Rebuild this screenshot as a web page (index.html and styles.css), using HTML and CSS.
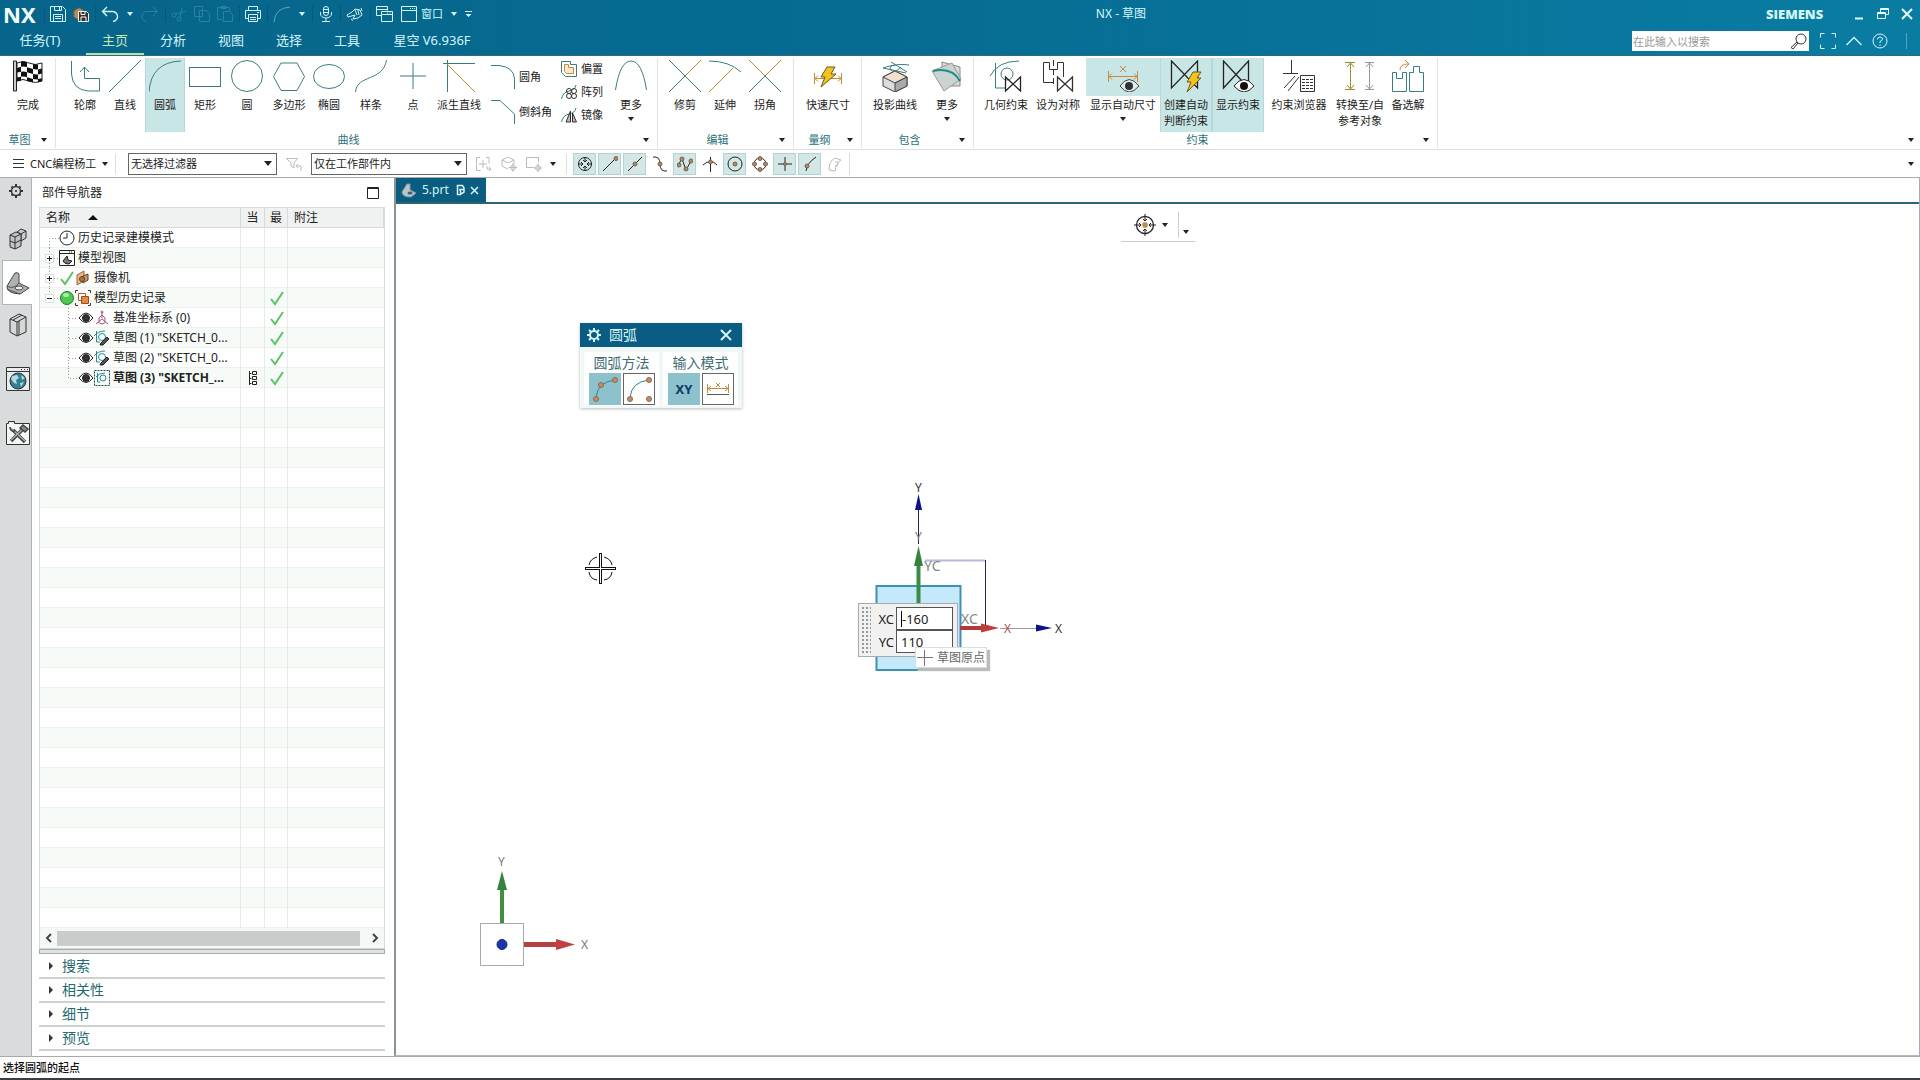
FILE: index.html
```html
<!DOCTYPE html>
<html lang="zh-CN">
<head>
<meta charset="utf-8">
<title>NX - 草图</title>
<link rel="stylesheet" href="styles.css">
</head>
<body>
<header class="app-header">
  <div class="title-row">
    <span class="brand">NX</span>
    <div class="quick">
      <i class="bar"></i>
      <button aria-label="保存"><svg width="16" height="16"><path d="M.5 .5h12l3 3v12H.5zM4.500 .5v4h7v-4M9.500 1v3M3.500 15.500v-7h9v7M5 10.500h6M5 12.500h6"/></svg></button>
      <button aria-label="另存"><svg width="16" height="16"><path d="M1 5l5-3 4 2v8l-4 2-5-3z" fill="#b98a5c" stroke="#8b6a4a"/><path d="M5.500 5.500h8l2 2v8h-10z" fill="#333" stroke="#eee"/><path d="M8 6v2.500h4V6M8 15v-4h5v4" stroke="#fff"/></svg></button>
      <i class="bar"></i>
      <button aria-label="撤消"><svg width="18" height="16"><path d="M6 1L1.500 5.500 6 10M2 5.500h9a5 5 0 0 1 1 10" stroke-width="1.4"/></svg></button>
      <span class="caret"></span>
      <button class="dim" aria-label="重做"><svg width="18" height="16"><path d="M12 1l4.500 4.500L12 10M16 5.500H7a5 5 0 0 0-2 10"/></svg></button>
      <i class="bar"></i>
      <button class="dim" aria-label="剪切"><svg width="16" height="16"><circle cx="3" cy="9" r="2"/><circle cx="8" cy="13" r="2"/><path d="M5 8l10-3M9 11l2-9"/></svg></button>
      <button class="dim" aria-label="复制"><svg width="16" height="16"><path d="M.5 .5h8v10h-8zM5.500 4.500h7l3 3v8h-10z"/></svg></button>
      <button class="dim" aria-label="粘贴"><svg width="16" height="16"><path d="M5 13.500H.5v-12h12V5M4 .5h5v2H4zM6.500 5.500h6l3 3v7h-9z"/></svg></button>
      <i class="bar"></i>
      <button aria-label="打印"><svg width="16" height="16"><path d="M3.500 4.500v-4h9v4M3.500 12.500h-3v-8h15v8h-3M3.500 8.500h9v7h-9zM5 11.500h6M5 13.500h6M12 6.500h2"/></svg></button>
      <i class="bar"></i>
      <button class="half" aria-label="圆弧"><svg width="18" height="16"><path d="M1 16Q2 2 17 1"/></svg></button>
      <span class="caret"></span>
      <i class="bar"></i>
      <button aria-label="语音"><svg width="16" height="16"><rect x="5.500" y=".5" width="5" height="9" rx="2.500"/><path d="M2.500 6v2a5.500 4 0 0 0 11 0V6M8 12v3.500M4 15.500h8M6 3.500h4M6 6.500h4"/></svg></button>
      <i class="bar"></i>
      <button aria-label="触控"><svg width="18" height="16"><path d="M1 9l5-3 3-3 5 1 2 5-4 3-5 1 2-4-7 2z"/><path d="M9 4l2 5M12 4l1 5M5 13l2 1.500M15 2l1 3"/></svg></button>
      <i class="bar"></i>
      <button aria-label="切换窗口"><svg width="18" height="16"><path d="M5.500 9.500h-5v-9h11v4M.5 3.500h11M5.500 5.500h11v10h-11zM5.500 8.500h11M11 7h1M13.500 7h1" /></svg></button>
      <button class="with-text"><svg width="16" height="16"><path d="M.5 .5h15v15H.5zM.5 4.500h15M9 2.500h1M11 2.500h1M13 2.500h1"/></svg>窗口</button>
      <span class="caret"></span>
      <button aria-label="更多命令"><svg width="8" height="8"><path d="M0 1.500h7"/><path d="M.5 4h6l-3 3z" fill="currentColor" stroke="none"/></svg></button>
    </div>
    <h1>NX - 草图</h1>
    <span class="siemens">SIEMENS</span>
    <div class="win">
      <button aria-label="最小化"><svg width="12" height="12"><path d="M2 10.500h8" stroke-width="2"/></svg></button>
      <button aria-label="还原"><svg width="12" height="12"><path d="M3.500 4V.5h8v6h-3M.5 4.500h8v6h-8zM.5 5.500h8M3.500 1.500h8"/></svg></button>
      <button aria-label="关闭"><svg width="12" height="12"><path d="M1 1l10 10M11 1L1 11" stroke-width="2"/></svg></button>
    </div>
  </div>
  <div class="menu-row">
    <nav class="tabs">
      <a href="#task" class="first">任务(T)</a>
      <a href="#home" class="active">主页</a>
      <a href="#analysis">分析</a>
      <a href="#view">视图</a>
      <a href="#select">选择</a>
      <a href="#tools">工具</a>
      <a href="#xk" class="wide">星空 V6.936F</a>
    </nav>
    <label class="search">
      <input type="text" placeholder="在此输入以搜索" aria-label="在此输入以搜索">
      <svg width="18" height="18"><circle cx="11" cy="7" r="5"/><path d="M7 10l1 1-5 6-2-1.500z"/></svg>
    </label>
    <div class="tools">
      <button aria-label="全屏"><svg width="16" height="16"><path d="M.5 4.500v-4h4M11.500 .5h4v4M15.500 11.500v4h-4M4.500 15.500h-4v-4"/></svg></button>
      <button aria-label="最小化功能区"><svg width="16" height="16"><path d="M.5 12L8 4.500l7.500 7.500" stroke-width="1.300"/></svg></button>
      <button aria-label="帮助"><svg width="16" height="16"><circle cx="8" cy="8" r="7"/><path d="M5.500 6.500Q5.500 4 8 4t2.500 2Q10.500 7.500 8 8.500v1.500M8 11.500V13"/></svg></button>
      <i class="bar"></i>
    </div>
  </div>
</header>

<section class="ribbon" aria-label="功能区">
  <div class="group">
    <div class="items">
      <button class="item w52 pad"><svg width="32" height="32"><path d="M1.500 1v30h3V1z" fill="#ccc" stroke="#222"/><path d="M5 3q6-3 12 0t13 0v18q-7 3-13 0T5 21z" fill="#fff" stroke="#222"/><path d="M9 1.500q3-.5 6 .7v5q-3-1-6-.5zM21 4q3 .6 5 .4v5q-3 .1-5-.4zM5 8l4-1.300v5L5 12.500zM15 7.200l6 1.800v5l-6-1.800zM26 9.400l4-1v5l-4 1zM9 11.700q3-.6 6 .5v5q-3-1-6-.5zM21 14q3 .6 5 .4v5q-3 .1-5-.4zM5 17.500l4-.8v4l-4 .5zM15 17.200l6 1.800v3.500l-6-1.500zM26 19l4-.8V21l-4 1.500z" fill="#111" stroke="none"/></svg><span>完成</span></button>
    </div>
    <footer><span>草图</span><i class="caret"></i></footer>
  </div>
  <div class="group">
    <div class="items curve">
      <button class="item"><svg width="32" height="32"><path d="M2.500 1v13q1 16 17 17h11V18.500h-15V7M11 12l4.500-5 4.500 5"/></svg><span>轮廓</span></button>
      <button class="item"><svg width="32" height="32"><path d="M0 32L32 0"/></svg><span>直线</span></button>
      <button class="item on"><svg width="32" height="32"><path d="M0 32Q2 2 32 1"/></svg><span>圆弧</span></button>
      <button class="item"><svg width="32" height="32"><rect x=".5" y="7.500" width="31" height="19"/></svg><span>矩形</span></button>
      <button class="item w44"><svg width="32" height="32"><circle cx="16" cy="16" r="15.500"/></svg><span>圆</span></button>
      <button class="item"><svg width="32" height="32"><path d="M.5 16.500L8 3h16l7.500 13.500L24 30.500H8z"/></svg><span>多边形</span></button>
      <button class="item"><svg width="32" height="32"><ellipse cx="16" cy="16.500" rx="15.500" ry="12"/></svg><span>椭圆</span></button>
      <button class="item w44"><svg width="32" height="32"><path d="M.5 32C2 14 28 22 31.500 0"/></svg><span>样条</span></button>
      <button class="item"><svg width="32" height="32"><path d="M16 3v26M3 16h26"/></svg><span>点</span></button>
      <button class="item w52"><svg width="32" height="32"><path d="M4.500 0v32M0 3.500h32"/><path d="M4 4l28 28" class="or"/></svg><span>派生直线</span></button>
      <div class="stack two">
        <button><svg width="24" height="24"><path d="M0 .5h8Q23 2 23.500 14v10" /></svg>圆角</button>
        <button><svg width="24" height="24"><path d="M0 .5h9L23.500 14v10"/></svg>倒斜角</button>
      </div>
      <div class="stack three">
        <button><svg width="16" height="16"><path d="M.5 .5h9v3h6v12H4.500l-4-4z"/><path d="M3.500 3.500h4v3h5v6h-7l-2-2z" class="or" fill="#fbeacb"/></svg>偏置</button>
        <button><svg width="16" height="16"><path d="M.5 15Q2 8 8 7t7-6"/><g stroke="#333"><circle cx="8" cy="7" r="2.500"/><circle cx="13" cy="7" r="2.500"/><circle cx="8" cy="12" r="2.500"/><circle cx="13" cy="12" r="2.500"/></g></svg>阵列</button>
        <button><svg width="16" height="16"><path d="M.5 15Q2 8 8 7t7-6"/><path d="M9.500 4v11H5zM11.500 6v9h4z" stroke="#333" fill="#bbb"/></svg>镜像</button>
      </div>
      <button class="item w52"><svg width="32" height="32"><path d="M.5 30Q5 1 16 1t15.500 29"/></svg><span>更多</span><i class="caret"></i></button>
    </div>
    <footer><span>曲线</span><i class="caret"></i></footer>
  </div>
  <div class="group">
    <div class="items edit">
      <button class="item"><svg width="32" height="32"><path d="M0 0l32 32M0 32l16-16"/><path d="M16 16L32 0" class="or"/></svg><span>修剪</span></button>
      <button class="item"><svg width="32" height="32"><path d="M0 1q20 0 32 11"/><path d="M0 32L24 8" class="or"/></svg><span>延伸</span></button>
      <button class="item"><svg width="32" height="32"><path d="M0 32l16-16 16 16"/><path d="M0 0l16 16L32 0" class="or"/></svg><span>拐角</span></button>
    </div>
    <footer><span>编辑</span><i class="caret"></i></footer>
  </div>
  <div class="group">
    <div class="items dim-group">
      <button class="item w52"><svg width="32" height="32"><path d="M2.500 13v11M29.500 13v11M3 18.500h26M6 15.500l-3 3 3 3M26 15.500l3 3-3 3" class="or"/><path d="M15 7h8l-4 7h5L9 27l4-10H9z" fill="#f5c21d" stroke="#6b5a20"/></svg><span>快速尺寸</span></button>
    </div>
    <footer><span>量纲</span><i class="caret"></i></footer>
  </div>
  <div class="group">
    <div class="items include">
      <button class="item w52"><svg width="32" height="32"><path d="M4 17l12-6 12 6v9l-12 6-12-6z" fill="#ddd" stroke="#444"/><path d="M4 17l12-6 12 6-12 6z" fill="#f3e1cb" stroke="#444"/><path d="M28 17v9l-12 6v-9z" fill="#aaa" stroke="#444"/><path d="M4 8Q18 3 30 5M4 8l23 5M12 2l16 10M16 5Q9 6 12 10t10-3"/></svg><span>投影曲线</span></button>
      <button class="item w52"><svg width="32" height="32"><path d="M11 2l18 5v19H11z" fill="#d8dcdc" stroke="#888"/><path d="M1 11L21 3l9 16-17 12z" fill="#cbd2d2" stroke="#999"/><path d="M2 11q19-4 27 10" stroke="#179080" stroke-width="2"/></svg><span>更多</span><i class="caret"></i></button>
    </div>
    <footer><span>包含</span><i class="caret"></i></footer>
  </div>
  <div class="group">
    <div class="items constraint">
      <button class="item w52"><svg width="32" height="32"><path d="M5.500 3v25h10M0 16Q8 1 29 1"/><circle cx="17" cy="14" r="6"/><path d="M15.500 17v14l15-14v14z" stroke="#222" stroke-width="1.300"/></svg><span>几何约束</span></button>
      <button class="item w52"><svg width="32" height="32"><path d="M11 22.500H1.500v-20h6v7h8v-7h6V17" stroke="#333"/><path d="M11.500 0v24" stroke="#333" stroke-dasharray="6 3"/><path d="M15.500 17v14l15-14v14z" stroke="#333" stroke-width="1.300"/></svg><span>设为对称</span></button>
      <button class="item split-on"><svg width="32" height="32"><path d="M1.500 11v11M30.500 11v11M2 16.500h28M5 13.500l-3 3 3 3M27 13.500l3 3-3 3M13 6l6 6M19 6l-6 6" class="or"/><path d="M13 26q9-13 19 0-10 12-19 0z" fill="#dceeee" stroke="#444"/><circle cx="22" cy="26" r="4" fill="#333" stroke="none"/></svg><span>显示自动尺寸</span><i class="caret"></i></button>
      <button class="item w52 on"><svg width="32" height="32"><path d="M1.500 1v27L27.500 1v27z" stroke="#222" stroke-width="1.300"/><path d="M23 12h8l-4 6h4L17 32l4-10h-4z" fill="#f5c21d" stroke="#6b5a20"/></svg><span>创建自动<br>判断约束</span></button>
      <button class="item w52 on"><svg width="32" height="32"><path d="M1.500 1v27L26.500 1v27z" stroke="#222" stroke-width="1.300"/><path d="M12 26q10-13 20 0-10 12-20 0z" fill="#fff" stroke="#222"/><circle cx="22" cy="26" r="4" fill="#111" stroke="none"/></svg><span>显示约束</span></button>
      <button class="item w68"><svg width="32" height="32"><path d="M0 13.500h15M8.500 0v13M1 28l11-12M5 31L16 17M17.500 15.500h14v16h-14z" stroke="#333"/><path d="M19 19.500h11M19 22.500h11M19 25.500h11M19 28.500h11" stroke="#333" stroke-dasharray="3 1"/></svg><span>约束浏览器</span></button>
      <button class="item w52"><svg width="32" height="32"><path d="M1 2.500h10M1 29.500h10M6.500 3v26M3 7l3.500-4L10 7M3 25l3.500 4 3.500-4" stroke="#a58a2a"/><path d="M21 2.500h9M21 29.500h9M25.500 3v26M22 7l3.500-4L29 7M22 25l3.500 4 3.500-4" stroke="#999"/></svg><span>转换至/自<br>参考对象</span></button>
      <button class="item w44"><svg width="32" height="32"><path d="M.5 12.500h4v6h6v-6h4v19H.5zM17.500 31.500v-19h4v-6h6v6h4v19z"/><path d="M8 10q0-6 8-6h1M13 0l4 4-4 4" class="or"/></svg><span>备选解</span></button>
    </div>
    <footer><span>约束</span><i class="caret"></i></footer>
  </div>
  <i class="caret row-end"></i>
</section>

<section class="select-bar" aria-label="选择条">
  <button class="menu-btn"><svg width="11" height="11"><path d="M0 1.500h11M0 5.500h11M0 9.500h11" stroke="#333"/></svg>CNC编程杨工<i class="caret"></i></button>
  <label class="combo filter"><select aria-label="选择过滤器"><option>无选择过滤器</option></select><i class="caret"></i></label>
  <button class="plain off" aria-label="重置过滤器"><svg width="16" height="16"><path d="M.5 2.500h11L8 7v5l-3-2V7zM10 10h5v5M12 8l-2 2 2 2"/></svg></button>
  <label class="combo scope"><select aria-label="选择范围"><option>仅在工作部件内</option></select><i class="caret"></i></label>
  <div class="small-tools">
    <button class="plain off" aria-label="选择模式"><svg width="16" height="16"><path d="M4 1.500H.5v13h4M10 1.500h3v6M7 4v8M3 8h8M11 10v3h4M13 15l2-2-2-2"/></svg></button>
    <button class="plain off" aria-label="体选择"><svg width="16" height="16"><path d="M1 4l6-3 6 3v4M7 13l-6-3V4l6 3 6-3M12 7v9M7.500 11.500h9"/><circle cx="12" cy="11.500" r="2.500"/></svg></button>
    <button class="plain off" aria-label="区域选择"><svg width="16" height="16"><path d="M8 11.500H.5v-10h12V6M12 7v9M8 12h8"/><circle cx="12" cy="12" r="2.500"/></svg></button>
    <i class="caret"></i>
  </div>
  <div class="snaps">
    <button class="on" aria-label="启用捕捉点"><svg width="16" height="16"><circle cx="8" cy="8" r="6.500"/><path d="M8 1v5M8 10v5M1 8h5M10 8h5M6 4l2 2 2-2M6 12l2-2 2 2M4 6l2 2-2 2M12 6l-2 2 2 2"/></svg></button>
    <button class="on" aria-label="终点"><svg width="16" height="16"><path d="M1 15L14 2"/><circle cx="14" cy="2.500" r="2" class="dot"/></svg></button>
    <button class="on" aria-label="中点"><svg width="16" height="16"><path d="M1 15L15 1"/><circle cx="8" cy="8" r="2" class="dot"/></svg></button>
    <button aria-label="控制点"><svg width="16" height="16"><path d="M1 1q7-1 7 7t7 7"/><circle cx="8" cy="8" r="2" class="dot"/></svg></button>
    <button class="on" aria-label="极点"><svg width="16" height="16"><path d="M1 9L5 3l4 11 5-9"/><circle cx="2" cy="9" r="2" class="dot"/><circle cx="5" cy="3" r="2" class="dot"/><circle cx="9" cy="13" r="2" class="dot"/><circle cx="14" cy="5" r="2" class="dot"/></svg></button>
    <button aria-label="交点"><svg width="16" height="16"><path d="M8.500 1v15M1 9q8-7 14 0"/><circle cx="8.500" cy="6" r="2" class="dot"/></svg></button>
    <button class="on" aria-label="圆心"><svg width="16" height="16"><circle cx="8" cy="8" r="7"/><circle cx="8" cy="8" r="2" class="dot"/></svg></button>
    <button aria-label="象限点"><svg width="16" height="16"><circle cx="8" cy="8" r="6"/><circle cx="8" cy="2.500" r="2" class="dot"/><circle cx="8" cy="13.500" r="2" class="dot"/><circle cx="2.500" cy="8" r="2" class="dot"/><circle cx="13.500" cy="8" r="2" class="dot"/></svg></button>
    <button class="on" aria-label="现有点"><svg width="16" height="16"><path d="M8 1v14M1 8h14"/><circle cx="8" cy="8" r="1.500" class="dot"/></svg></button>
    <button class="on" aria-label="曲线上的点"><svg width="16" height="16"><path d="M4 15Q5 7 14 1"/><circle cx="5" cy="10" r="2" class="dot"/></svg></button>
    <button class="off" aria-label="面上的点"><svg width="16" height="16"><path d="M2 14q0-9 6-12l6 2q-5 3-6 11zM8 6q4-1 3 2t-3 2"/></svg></button>
  </div>
  <i class="caret row-end"></i>
</section>

<main class="work">
  <nav class="rail" aria-label="资源条">
    <button class="gear" aria-label="设置"><svg width="14" height="14"><circle cx="7" cy="7" r="4.500" stroke-width="1.500"/><path d="M7 0v2M7 12v2M0 7h2M12 7h2" stroke-width="2"/><path d="M2.500 2.500l1 1M10.500 10.500l1 1M11.500 2.500l-1 1M3.500 10.500l-1 1" stroke-width="2"/><circle cx="7" cy="7" r="1" fill="#222" stroke="none"/></svg></button>
    <button class="gap" aria-label="装配导航器"><svg width="20" height="24"><path d="M9 5l4-3 5 2v7l-5 3z" fill="#c9cccc"/><path d="M9 5l4 2 5-3M13 7v6"/><path d="M2 8l6-3 5 2v12l-6 3-5-2z" fill="#c0c4c4"/><path d="M2 8l5 2 6-3M7 10v12M2 14l5 2 6-3"/></svg></button>
    <button class="current" aria-label="部件导航器"><svg width="26" height="24"><path d="M2 15L10 2q3-1 4 1v9l10 5-9 6q-14-1-13-8z" fill="#aeb2b2" stroke="#444"/><path d="M2 15q6 4 12-3M2 18l13 5" stroke="#555"/><ellipse cx="14" cy="17" rx="4" ry="2" fill="#eee" stroke="#444"/></svg></button>
    <button class="reuse" aria-label="重用库"><svg width="18" height="24"><path d="M1 6l9-5 7 3v15l-9 4-7-4z" fill="#d5d8d8"/><path d="M1 6l7 3 9-5M8 9v14M4 7l9-5M10 8v14"/></svg></button>
    <button class="framed globe" aria-label="Web 浏览器"><svg width="24" height="24"><path d="M.5 .5h23v23H.5z" fill="#e9eded"/><path d="M1 4.500h22M15 2.500h1M18 2.500h1M21 2.500h1"/><circle cx="12" cy="14" r="8" fill="#2f7f95"/><path d="M6 9l5-1 2 3-3 2 1 4-3-1-3-4zM15 8l4 3-3 2zM14 16l4-1-3 5z" fill="#b8d8dc" stroke="none"/></svg></button>
    <button class="framed tool" aria-label="工具"><svg width="24" height="24"><path d="M.5 2.500h2v-2h6v2h15v21H.5z" fill="#f4f6f6"/><path d="M5 20L17 8M7 9l12 12" stroke="#444" stroke-width="3.500"/><path d="M5 19L17 8M7 9l12 11" stroke="#aaa" stroke-width="1.500"/><path d="M4 6q0 5 5 4M14 7l3-3 5 4-3 3z" stroke="#444" stroke-width="1.500" fill="#888"/></svg></button>
  </nav>

  <aside class="panel">
    <div class="panel-head"><h2>部件导航器</h2><button aria-label="停靠"><svg width="12" height="12"><path d="M.5 .5h11v11H.5zM.5 1.500h11" stroke="#222"/></svg></button></div>
    <div class="tree">
      <table>
        <colgroup><col class="c-name"><col class="c-cur"><col class="c-new"><col></colgroup>
        <thead><tr><th scope="col">名称<i class="up"></i></th><th scope="col" class="mid">当</th><th scope="col" class="mid">最</th><th scope="col">附注</th></tr></thead>
        <tbody>
          <tr><td><div class="cell"><svg class="twig" width="17" height="20"><path d="M7.500 20V10.500H17"/></svg><svg width="16" height="16"><circle cx="8" cy="8" r="7" fill="#fff"/><path d="M8 3v5H4"/></svg><span>历史记录建模模式</span></div></td><td></td><td></td><td></td></tr>
          <tr><td><div class="cell"><svg class="twig" width="17" height="20"><path d="M7.500 0v20M12 10.500h5"/><path class="box" d="M3.500 6.500h8v8h-8z"/><path class="sign" d="M5 10.500h5M7.500 8v5"/></svg><svg width="16" height="16"><path d="M.5 .5h15v15H.5zM.5 3.500h15M10 2h1M12 2h1"/><path d="M4 11l4-5 1 4 4 1-3 3q-5 0-6-3z" fill="#777"/></svg><span>模型视图</span></div></td><td></td><td></td><td></td></tr>
          <tr><td><div class="cell"><svg class="twig" width="17" height="20"><path d="M7.500 0v20M12 10.500h5"/><path class="box" d="M3.500 6.500h8v8h-8z"/><path class="sign" d="M5 10.500h5M7.500 8v5"/></svg><svg width="16" height="16"><path class="ok" d="M2 9l4 5 8-12"/></svg><svg width="16" height="16"><path d="M2 5l7-4v10l-7 4z" fill="#e6b98c" stroke="#a0622d"/><path d="M8 6l5-2v6l-5 3z" fill="#c9955f" stroke="#604020"/><circle cx="7" cy="9" r="2.500" fill="#a97848" stroke="#604020"/></svg><span>摄像机</span></div></td><td></td><td></td><td></td></tr>
          <tr><td><div class="cell"><svg class="twig" width="17" height="20"><path d="M7.500 0v7M12 10.500h5"/><path class="box" d="M3.500 6.500h8v8h-8z"/><path class="sign" d="M5 10.500h5"/></svg><svg width="16" height="16"><circle cx="8" cy="8" r="6.500" fill="#4dc94f" stroke="#346a35"/><ellipse cx="7" cy="5" rx="3" ry="2" fill="#a9efa5" stroke="none"/></svg><svg width="16" height="16"><path d="M.5 3V.5H3M13 .5h2.500V3M15.500 13v2.500H13M3 15.500H.5V13" stroke="#553322"/><path d="M3.500 3.500h7v7h-7z" fill="#fff" stroke="#b35b1e"/><path d="M6.500 6.500h7v7h-7z" fill="#e08a45" stroke="#a04c12"/></svg><span>模型历史记录</span></div></td><td></td><td class="mid"><svg width="16" height="16"><path class="ok" d="M2 9l4 5 8-12"/></svg></td><td></td></tr>
          <tr><td><div class="cell"><svg class="twig" width="36" height="20"><path d="M26.500 0v20M27 10.500h9"/></svg><svg width="16" height="16"><path d="M1 8q7-10 14 0-7 9-14 0z" fill="#fff"/><circle cx="8" cy="8" r="3.500" fill="#333"/></svg><svg width="16" height="16"><path d="M8 8V2M8 9l-6 5M8 9l6 5M4.500 12.500q3.500 3 7 0M8 5L5 8v4M8 5l3 3v4" stroke="#a8527c"/><circle cx="8" cy="2" r="1" stroke="#a8527c"/></svg><span>基准坐标系 (0)</span></div></td><td></td><td class="mid"><svg width="16" height="16"><path class="ok" d="M2 9l4 5 8-12"/></svg></td><td></td></tr>
          <tr><td><div class="cell"><svg class="twig" width="36" height="20"><path d="M26.500 0v20M27 10.500h9"/></svg><svg width="16" height="16"><path d="M1 8q7-10 14 0-7 9-14 0z" fill="#fff"/><circle cx="8" cy="8" r="3.500" fill="#333"/></svg><svg width="16" height="16"><path d="M2.500 1v11H6M0 6q4-5 11-5" stroke="#2a8a96"/><circle cx="8" cy="7" r="3.500" stroke="#2a8a96"/><path d="M6 15l1-2 6-6 2 2-6 6z" fill="#555" stroke="#222"/></svg><span>草图 (1) "SKETCH_0...</span></div></td><td></td><td class="mid"><svg width="16" height="16"><path class="ok" d="M2 9l4 5 8-12"/></svg></td><td></td></tr>
          <tr><td><div class="cell"><svg class="twig" width="36" height="20"><path d="M26.500 0v20M27 10.500h9"/></svg><svg width="16" height="16"><path d="M1 8q7-10 14 0-7 9-14 0z" fill="#fff"/><circle cx="8" cy="8" r="3.500" fill="#333"/></svg><svg width="16" height="16"><path d="M2.500 1v11H6M0 6q4-5 11-5" stroke="#2a8a96"/><circle cx="8" cy="7" r="3.500" stroke="#2a8a96"/><path d="M6 15l1-2 6-6 2 2-6 6z" fill="#555" stroke="#222"/></svg><span>草图 (2) "SKETCH_0...</span></div></td><td></td><td class="mid"><svg width="16" height="16"><path class="ok" d="M2 9l4 5 8-12"/></svg></td><td></td></tr>
          <tr class="bold"><td><div class="cell"><svg class="twig" width="36" height="20"><path d="M26.500 0v10.500H36"/></svg><svg width="16" height="16"><path d="M1 8q7-10 14 0-7 9-14 0z" fill="#fff"/><circle cx="8" cy="8" r="3.500" fill="#333"/></svg><svg width="16" height="16"><path d="M.5 .5h15v15H.5z" stroke="#245" stroke-dasharray="2 1"/><path d="M3.500 3v9H6M2 7q3-4 9-4" stroke="#2a8a96"/><circle cx="9" cy="8" r="3" stroke="#2a8a96"/></svg><span>草图 (3) "SKETCH_...</span></div></td><td class="mid"><svg width="10" height="16"><path d="M1.500 1v14M1.500 3.500h2M1.500 8.500h2M1.500 13.500h2M4.500 1.500h4v3h-4zM4.500 6.500h4v3h-4zM4.500 11.500h4v3h-4z"/></svg></td><td class="mid"><svg width="16" height="16"><path class="ok" d="M2 9l4 5 8-12"/></svg></td><td></td></tr>
        </tbody>
      </table>
    </div>
    <div class="hscroll">
      <button aria-label="向左滚动"><svg width="8" height="10"><path d="M6 1L2 5l4 4" stroke-width="2"/></svg></button>
      <span class="thumb"></span>
      <button aria-label="向右滚动"><svg width="8" height="10"><path d="M2 1l4 4-4 4" stroke-width="2"/></svg></button>
    </div>
    <div class="splitter"></div>
    <div class="sections">
      <button><i></i>搜索</button>
      <button><i></i>相关性</button>
      <button><i></i>细节</button>
      <button><i></i>预览</button>
    </div>
  </aside>

  <section class="view">
    <div class="doc-tabs">
      <div class="doc-tab"><svg width="16" height="16"><path d="M1 10L6 2h3v6l6 3-5 4q-9 0-9-5z" fill="#b9c4c8" stroke="#8a979c"/><ellipse cx="9" cy="11" rx="2.500" ry="1.500" fill="#2d6b80" stroke="none"/></svg><span>5.prt</span><svg width="9" height="12"><path d="M5 10.500H1.500v-9h5L8 4v1M3 1.500h3M4 5.500h4v2.500L5 10z" stroke-width="1.500"/></svg><button aria-label="关闭 5.prt"><svg width="9" height="9"><path d="M1 1l7 7M8 1L1 8" stroke-width="1.500"/></svg></button></div>
    </div>
    <div class="canvas">
      <svg class="scene" role="img" aria-label="草图坐标系"><g transform="translate(-396 -204)">
        <path d="M600.500 553v31M585 568.500h31" stroke="#111" stroke-width="3"/><path d="M600.500 554v29M586 568.500h29" stroke="#fff"/>
        <path d="M604 557q7 2 8 8M612 572q-1 7-8 8M597 580q-7-1-8-8M589 565q1-6 8-8" stroke="#111"/>
        <path d="M925 560.500h60" stroke="#b9b9dc" stroke-width="2"/><path d="M985.500 560v66" stroke="#22225c"/>
        <rect x="876.500" y="586" width="84" height="84" fill="#c3e9fb" stroke="#3f90b8" stroke-width="2"/>
        <path d="M918.500 510v34" stroke="#22225c"/><path d="M918.500 494l3.500 16h-7z" fill="#10108c" stroke="none"/>
        <path d="M918.500 565v40" stroke="#3c8a48" stroke-width="4"/><path d="M918.500 546l4.500 20h-9z" fill="#37813f" stroke="none"/>
        <path d="M960 628h22" stroke="#b23a3a" stroke-width="4"/><path d="M999 628l-18 4.500v-9z" fill="#c23c3c" stroke="none"/>
        <path d="M1000 628.500h36" stroke="#9a9aa8"/><path d="M1052 628l-16 3.500v-7z" fill="#10108c" stroke="none"/>
        <g class="axis"><text x="915" y="492">Y</text><text x="1055" y="633">X</text></g>
        <g class="axis soft"><text x="915" y="541">Y</text><text x="924" y="571" class="csys">YC</text></g>
        <g class="axis red"><text x="1004" y="633">X</text><text x="961" y="624" class="csys">XC</text></g>
        <path d="M502 888v36" stroke="#41903f" stroke-width="4"/><path d="M502 871l5 19h-10z" fill="#37813f" stroke="none"/>
        <path d="M524 944.500h33" stroke="#b24343" stroke-width="5"/><path d="M575 944.500l-19 5.500v-11z" fill="#c24040" stroke="none"/>
        <rect x="480.500" y="923.500" width="43" height="42" fill="#fff" stroke="#aaa"/>
        <circle cx="502" cy="944.500" r="5" fill="#1c38a8" stroke="#142878"/>
        <g class="axis soft"><text x="498" y="866">Y</text><text x="581" y="949">X</text></g>
      </g></svg>

      <div class="mini-bar">
        <button aria-label="定向视图"><svg width="22" height="22"><circle cx="11" cy="11" r="8.500" stroke="#333" stroke-width="1.400"/><circle cx="11" cy="11" r="3" fill="#b98a55" stroke="#e0c8a0"/><path d="M11 0v7M11 15v7M0 11h7M15 11h7M9 5l2 2 2-2M9 17l2-2 2 2M5 9l2 2-2 2M17 9l-2 2 2 2" stroke="#222"/></svg></button>
        <i class="caret"></i><i class="rule"></i><i class="caret low"></i>
      </div>

      <div class="dialog" role="dialog" aria-label="圆弧">
        <div class="dialog-head"><svg width="14" height="14"><circle cx="7" cy="7" r="4" stroke-width="2"/><path d="M7 0v2.500M7 11.500V14M0 7h2.500M11.500 7H14M2 2l1.800 1.800M10.200 10.200L12 12M12 2l-1.800 1.800M3.800 10.200L2 12" stroke-width="2"/></svg><span>圆弧</span><button aria-label="关闭"><svg width="12" height="12"><path d="M1 1l10 10M11 1L1 11" stroke-width="2"/></svg></button></div>
        <div class="dialog-body">
          <fieldset><legend>圆弧方法</legend><div>
            <button class="on" aria-label="三点定圆弧"><svg width="30" height="30"><path d="M6 24Q7 8 25 6" stroke="#2a8496"/><circle cx="6" cy="25" r="2.500" class="knob"/><circle cx="11" cy="11" r="2.500" class="knob"/><circle cx="25" cy="6" r="2.500" class="knob"/></svg></button>
            <button aria-label="中心和端点定圆弧"><svg width="30" height="30"><path d="M6 24Q7 8 25 6" stroke="#2a8496"/><circle cx="6" cy="25" r="2.500" class="knob"/><circle cx="25" cy="25" r="2.500" class="knob"/><circle cx="25" cy="6" r="2.500" class="knob"/></svg></button>
          </div></fieldset>
          <fieldset><legend>输入模式</legend><div>
            <button class="on">XY</button>
            <button aria-label="参数模式"><svg width="30" height="30"><path d="M4.500 10v9M25.500 10v9M5 14.500h20M8 12l-3 2.500L8 17M22 12l3 2.500-3 2.500M13 9l4 4M17 9l-4 4" class="or"/><path d="M4 20.500h22" stroke="#555"/></svg></button>
          </div></fieldset>
        </div>
      </div>

      <div class="coords">
        <i class="grip"></i>
        <div class="fields">
          <label for="xc">XC</label><div class="field active"><input id="xc" type="text" value="-160"></div>
          <label for="yc">YC</label><div class="field"><input id="yc" type="text" value="110"></div>
        </div>
      </div>
      <div class="tip" role="tooltip"><svg width="16" height="16"><path d="M7.500 0v16M0 7.500h16" stroke="#777"/></svg>草图原点</div>
    </div>
  </section>
</main>

<footer class="status"><span>选择圆弧的起点</span></footer>
</body>
</html>
```

FILE: styles.css
```css
* { box-sizing: border-box; }
body {
  margin: 0;
  min-height: 100vh;
  display: flex;
  flex-direction: column;
  overflow: hidden;
  background: #fff;
  color: #222;
  font: 12px/16px "Noto Sans", "Noto Sans CJK SC", sans-serif;
}
button, input, select { font: inherit; color: inherit; }
button { margin: 0; padding: 0; border: 0; background: none; white-space: nowrap; }
svg { display: block; flex: none; fill: none; stroke: currentColor; }
.caret {
  flex: none;
  width: 0;
  height: 0;
  border: 3px solid transparent;
  border-top: 4px solid currentColor;
  border-bottom: 0;
}
.or { stroke: #c68a3c; }

/* header */
.app-header {
  height: 56px;
  color: #d2f6fb;
  background: linear-gradient(90deg, #07648a, #076d93 50%, #0a7ca2);
  border-bottom: 1px solid #35677a;
}
.title-row { display: flex; align-items: center; height: 27px; }
.brand { width: 36px; padding-left: 3px; font: 700 22px/26px "Noto Sans", sans-serif; color: #f0ffff; }
.quick { display: flex; align-items: center; gap: 7px; width: 440px; padding-left: 9px; }
.quick .bar { width: 1px; height: 16px; margin: 0 -2px 0 -1px; background: #0a5678; }
.quick .caret { margin: 0 1px; }
.quick .dim { opacity: .18; }
.quick .half { opacity: .45; }
.quick .with-text { display: flex; align-items: center; gap: 4px; font-size: 11px; }
.title-row h1 { flex: 1; margin: 0; text-align: center; font-size: 12px; font-weight: 400; }
.siemens { width: 87px; font: 800 13px/16px "Open Sans", sans-serif; }
.win { display: flex; gap: 12px; padding-right: 7px; color: #e8ffff; }
.menu-row { display: flex; align-items: center; height: 28px; }
.tabs { flex: 1; display: flex; font-size: 13px; line-height: 18px; }
.tabs a { width: 58px; padding: 4px 0; color: inherit; text-align: center; text-decoration: none; white-space: nowrap; border-bottom: 2px solid transparent; }
.tabs .first { width: 80px; margin-right: 6px; }
.tabs .wide { width: 112px; }
.tabs .active { color: #c5e8b0; border-color: #b9e3a4; }
.search { display: flex; align-items: center; width: 177px; height: 20px; background: #fff; color: #333; padding-right: 1px; }
.search input { flex: 1; min-width: 0; height: 20px; padding: 0 1px; border: 0; outline: 0; background: none; font-size: 11px; }
.search input::placeholder { color: #999; }
.tools { display: flex; align-items: center; gap: 10px; width: 111px; padding-left: 11px; }
.tools .bar { width: 1px; height: 16px; margin-left: 8px; background: #4aa5c0; }

/* ribbon */
.ribbon { display: flex; height: 94px; padding-top: 2px; border-bottom: 1px solid #ddd; font-size: 11px; }
.group { display: flex; flex-direction: column; margin-bottom: 1px; border-right: 1px solid #e0e4e4; }
.items { display: flex; height: 74px; color: #3d7c7e; }
.item { display: flex; flex-direction: column; align-items: center; width: 40px; padding-top: 2px; border: 1px solid transparent; border-top: 0; border-bottom: 0; }
.item span { margin-top: 5px; color: #222; }
.item .caret { margin-top: 4px; color: #222; }
.item.on { background: #c9e6e6; border-color: #b7d8d8; }
.item.w44 { width: 44px; }
.item.w52 { width: 52px; }
.item.w68 { width: 70px; }
.pad { margin: 0 1px 0 2px; }
.item.split-on { width: 74px; margin-left: 2px; background: linear-gradient(#c9e6e6 38px, transparent 38px); }
.curve { padding-left: 9px; }
.stack { display: flex; flex-direction: column; }
.stack button { display: flex; align-items: center; gap: 4px; color: #222; }
.stack svg { color: #3d7c7e; }
.two { gap: 11px; width: 70px; padding: 7px 0 0 6px; }
.three { gap: 7px; width: 50px; padding: 3px 0 0 6px; }
.edit { padding: 0 8px 0 7px; }
.dim-group { padding: 0 7px 0 8px; }
.include { padding: 0 0 0 7px; }
.constraint { padding: 0 7px 0 6px; }
.group footer { display: flex; align-items: center; height: 16px; padding-right: 8px; color: #2b7176; }
.group footer span { flex: 1; padding-right: 2px; text-align: center; }
.group footer .caret { color: #222; }
.row-end { margin: 0 6px 0 auto; }
.ribbon > .row-end { align-self: flex-end; margin-bottom: 7px; }

/* selection bar */
.select-bar { display: flex; align-items: center; height: 28px; border-bottom: 1px solid #aaa; font-size: 11px; }
.menu-btn { display: flex; align-items: center; gap: 6px; width: 116px; height: 20px; padding-left: 13px; border-right: 1px solid #ddd; }
.combo { display: flex; align-items: center; height: 22px; padding-right: 4px; border: 1px solid #666; }
.combo select { flex: 1; height: 20px; padding: 0 2px; border: 0; background: none; appearance: none; outline: 0; }
.combo .caret { border-width: 5px 4px 0; }
.filter { width: 149px; margin-left: 12px; }
.scope { width: 156px; margin-left: 9px; }
.plain { margin-left: 9px; }
.off { color: #bbb; }
.small-tools { display: flex; align-items: center; width: 100px; height: 20px; border-right: 1px solid #ddd; }
.small-tools .caret { margin-left: 8px; }
.snaps { display: flex; gap: 2px; padding: 0 3px 0 6px; border-right: 1px solid #ddd; }
.snaps button { display: grid; place-items: center; width: 23px; height: 22px; border: 1px solid transparent; }
.snaps .on { background: #d2e7e6; border-color: #b4d2d2; }
.dot { fill: #b08868; stroke: #7a604c; }

/* work area */
.work { flex: 1; display: flex; min-height: 0; }
.rail { display: flex; flex-direction: column; width: 32px; background: #d9dcdc; border-right: 1px solid #b0b4b4; color: #333; }
.rail button { display: grid; place-items: center; height: 45px; padding-left: 4px; }
.rail .gear { height: 26px; padding: 0; }
.rail .gap { margin-top: 14px; height: 42px; }
.rail .current { margin: 0 -1px 0 2px; padding: 0; background: #fff; border: 1px solid #b0b4b4; border-right: 0; }
.rail .reuse { height: 40px; }
.rail .framed { height: 24px; }
.rail .globe { margin-top: 22px; }
.rail .tool { margin-top: 30px; }
.panel { display: flex; flex-direction: column; width: 362px; padding: 0 9px 0 7px; }
.panel-head { display: flex; align-items: center; justify-content: space-between; height: 29px; padding: 2px 6px 2px 3px; }
.panel-head h2 { margin: 0; font-size: 12px; font-weight: 400; }
.tree {
  flex: 1;
  border: 1px solid #d5dada;
  border-bottom: 0;
  background:
    linear-gradient(90deg, transparent 200px, #e6ebe8 200px 201px, transparent 201px 224px, #e6ebe8 224px 225px, transparent 225px 247px, #e6ebe8 247px 248px, transparent 248px),
    repeating-linear-gradient(#fff 0 19px, #edf2ee 19px 20px, #f7fbf7 20px 39px, #edf2ee 39px 40px) 0 20px;
}
.tree table { width: 100%; table-layout: fixed; border-collapse: separate; border-spacing: 0; }
.c-name { width: 201px; }
.c-cur { width: 24px; }
.c-new { width: 23px; }
th { height: 20px; padding: 0 0 0 6px; text-align: left; font-weight: 400; background: #eff2f1; border-right: 1px solid #d5dada; border-bottom: 1px solid #d5dada; }
td { height: 20px; padding: 0; }
.mid { padding: 0; text-align: center; }
.mid svg { margin: 0 auto; }
.up { display: inline-block; margin: 0 0 2px 18px; border: 5px solid transparent; border-top: 0; border-bottom-color: #111; }
.cell { display: flex; align-items: center; height: 20px; padding-left: 2px; white-space: nowrap; }
.cell span { padding-left: 3px; }
.twig { stroke: #999; stroke-dasharray: 1 2; }
.twig .box { fill: #fff; stroke: #ddd; stroke-dasharray: none; }
.twig .sign { stroke: #222; stroke-dasharray: none; }
.ok { stroke: #5cc268; stroke-width: 2; }
.bold { font-weight: 700; }
.hscroll { display: flex; align-items: center; gap: 4px; height: 21px; padding: 0 5px; border: 1px solid #d5dada; border-top: 0; background: #f5f8f6; color: #444; }
.thumb { flex: 1; height: 15px; margin-right: 7px; background: #c9cccb; }
.splitter { height: 5px; border: 1px solid #a5aaaa; background: #dfe3e1; }
.sections { padding: 1px 0 5px; }
.sections button { display: flex; align-items: center; gap: 9px; width: 100%; height: 24px; padding-left: 10px; font-size: 14px; color: #23696e; border-bottom: 2px solid #ced1d1; }
.sections i { border: 4px solid transparent; border-left: 4px solid #333; border-right: 0; }

/* graphics window */
.view { flex: 1; display: flex; flex-direction: column; min-width: 0; border-left: 2px solid #8b9494; border-right: 1px solid #aab; border-bottom: 1px solid #b5baba; }
.doc-tabs { display: flex; height: 26px; border-bottom: 2px solid #2a6672; }
.doc-tab { display: flex; align-items: center; width: 90px; gap: 5px; padding-left: 5px; background: #0a5d80; color: #d5f5fa; }
.doc-tab span { width: 29px; }
.canvas { position: relative; flex: 1; overflow: hidden; }
.scene { position: absolute; inset: 0; width: 100%; height: 100%; }
.axis { fill: #333; stroke: none; font: 12px "Noto Sans", sans-serif; }
.soft { fill: #777; }
.red { fill: #b05050; }
.csys { font-size: 14px; fill: #7d8a84; }
.mini-bar { position: absolute; left: 725px; top: 1px; display: flex; align-items: center; width: 74px; height: 37px; padding: 3px 6px 0 13px; border-bottom: 1px solid #ccc; }
.mini-bar .caret { margin-left: 6px; }
.rule { width: 1px; height: 26px; margin-left: 10px; background: #ccc; }
.mini-bar .low { margin: 14px 0 0 4px; }
.dialog { position: absolute; left: 184px; top: 119px; width: 162px; font-size: 14px; box-shadow: 0 1px 3px #bbb; background: #f0f8f8; }
.dialog-head { display: flex; align-items: center; gap: 8px; height: 24px; padding: 0 10px 0 7px; background: #0b5c82; color: #d5f5fa; }
.dialog-head span { flex: 1; }
.dialog-body { display: flex; gap: 4px; padding: 5px 4px 2px; }
fieldset { min-width: 0; flex: 1; margin: 0; padding: 0 5px 1px; border: 0; background: #fff; }
legend { float: left; width: 100%; padding: 0; height: 21px; line-height: 22px; text-align: center; color: #3f6b74; }
fieldset div { display: flex; gap: 2px; clear: both; }
fieldset button { display: grid; place-items: center; flex: none; width: 32px; height: 32px; border: 1px solid #666; background: #fff; }
fieldset .on { background: #8dc2cc; border-color: #8dc2cc; color: #103a66; font-weight: 700; font-size: 13px; }
.knob { fill: #c38d68; stroke: #94674a; }
.coords { position: absolute; left: 462px; top: 399px; display: flex; width: 100px; padding: 3px 4px 3px 3px; background: #f1f1f1; border: 1px solid #aaa; font-size: 13px; }
.grip { width: 9px; background: radial-gradient(circle at 1px 1px, #999 1px, transparent 1px) 0 0 / 4px 4px; }
.fields { flex: 1; display: grid; grid-template-columns: 1fr 57px; align-items: center; }
.fields label { padding-right: 2px; text-align: right; }
.field { display: flex; align-items: center; height: 23px; padding-left: 4px; background: #fff; border: 1px solid #555; }
.field input { min-width: 0; width: 100%; padding: 0; border: 0; outline: 0; background: none; }
.active input { border-left: 1px solid #000; }
.tip { position: absolute; left: 519px; top: 443px; display: flex; align-items: center; gap: 4px; height: 21px; padding: 0 1px; background: #fff; border: 1px solid #ddd; box-shadow: 3px 3px 1px #bbb; color: #666; white-space: nowrap; }

.status { height: 24px; padding: 3px 3px 0; border-top: 1px solid #aaa; border-bottom: 2px solid #3b3e40; font-size: 11px; font-weight: 500; color: #111; }
```
